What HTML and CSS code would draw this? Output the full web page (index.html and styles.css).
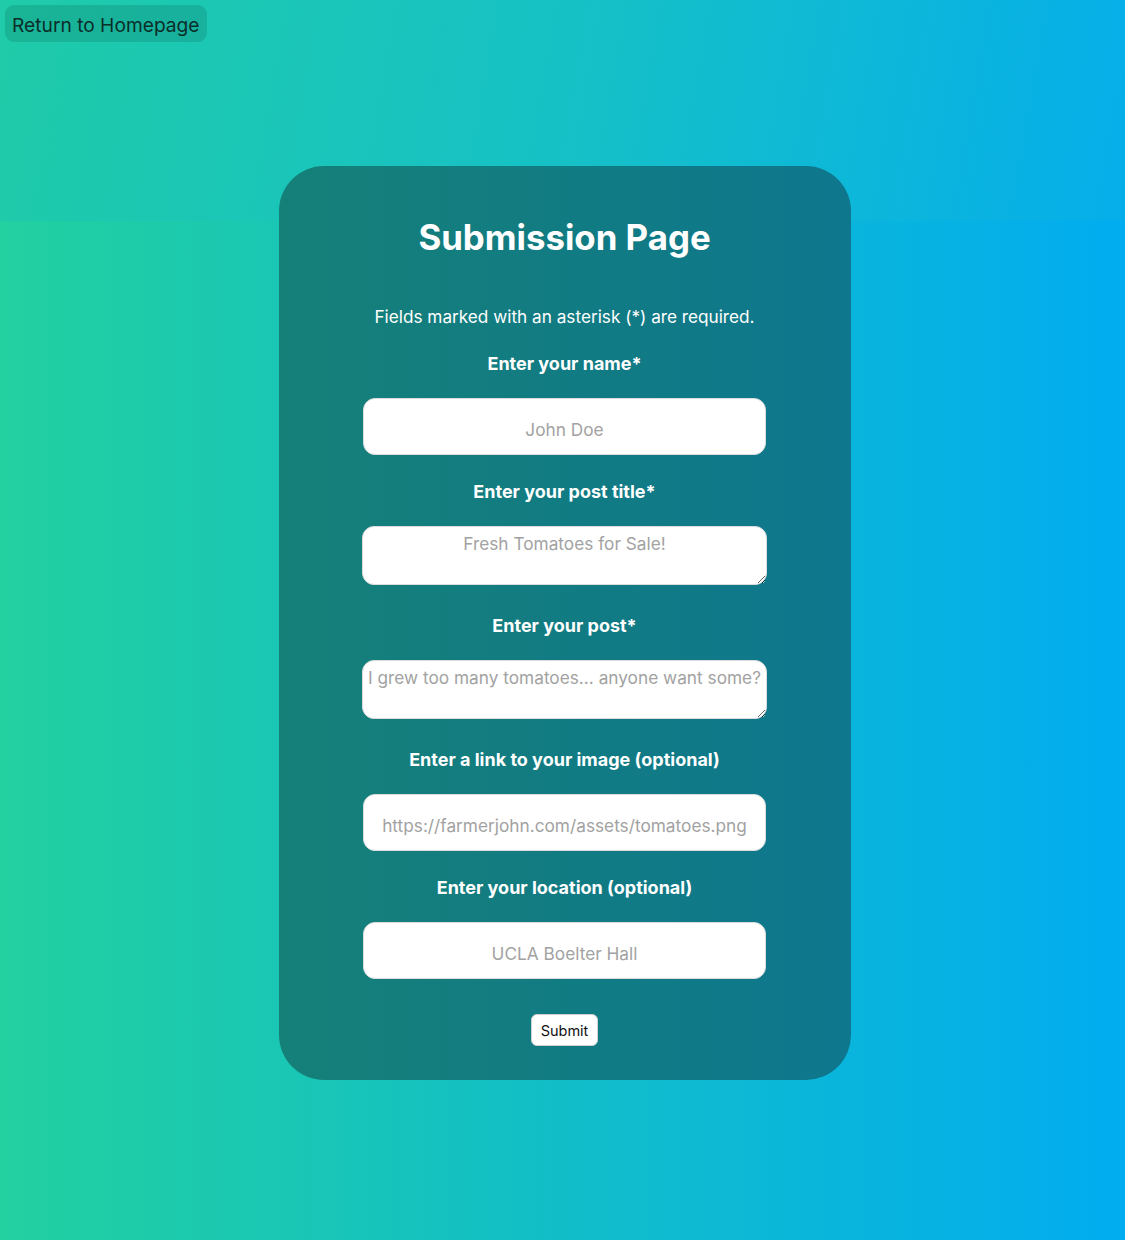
FILE: index.html
```html
<!DOCTYPE html>
<html lang="en">
<head>
<meta charset="utf-8">
<title>Submission Page</title>
<link rel="stylesheet" href="styles.css">
</head>
<body>
<header class="band">
  <button class="home-btn" type="button">Return to Homepage</button>
</header>
<main class="card">
  <h1 class="title">Submission Page</h1>
  <p class="note">Fields marked with an asterisk (*) are required.</p>
  <form class="form">
    <label class="label label-first" for="name">Enter your name*</label>
    <input class="field" id="name" type="text" placeholder="John Doe">
    <label class="label" for="title">Enter your post title*</label>
    <textarea class="area" id="title" placeholder="Fresh Tomatoes for Sale!"></textarea>
    <label class="label label-gap" for="post">Enter your post*</label>
    <textarea class="area area-tight" id="post" placeholder="I grew too many tomatoes... anyone want some?"></textarea>
    <label class="label label-gap" for="img">Enter a link to your image (optional)</label>
    <input class="field" id="img" type="text" placeholder="https://farmerjohn.com/assets/tomatoes.png">
    <label class="label" for="loc">Enter your location (optional)</label>
    <input class="field" id="loc" type="text" placeholder="UCLA Boelter Hall">
    <button class="submit" type="submit">Submit</button>
  </form>
</main>
</body>
</html>
```

FILE: styles.css
```css
html, body {
  margin: 0;
  padding: 0;
}
body {
  min-height: 1240px;
  background: linear-gradient(to right, #22d0a0, #01acf0);
  font-family: Inter, "Noto Sans", sans-serif;
}
.band {
  height: 221px;
  box-sizing: border-box;
  padding: 5px;
  background: linear-gradient(100deg, #1fcba8 0%, #16c1c6 50%, #05aeea 100%);
}
.home-btn {
  display: block;
  height: 37px;
  box-sizing: border-box;
  padding: 2px 7px 0;
  border: none;
  border-radius: 9px;
  background: rgba(0, 40, 35, 0.14);
  color: #0b2e29;
  font-family: Inter, "Noto Sans", sans-serif;
  font-size: 19.2px;
  line-height: 34px;
}
.card {
  width: 572px;
  box-sizing: border-box;
  margin: -55px 0 0 calc(50% - 284px);
  padding: 49px 0 34px;
  border-radius: 45px;
  background: linear-gradient(to right, #158078, #0e778e);
  color: #fff;
  display: flex;
  flex-direction: column;
  align-items: center;
}
.title {
  margin: 0;
  font-size: 34.8px;
  line-height: 44px;
  font-weight: 700;
}
.note {
  margin: 47px 0 0;
  font-size: 17.2px;
  line-height: 22px;
}
.form {
  display: flex;
  flex-direction: column;
  align-items: center;
  width: 100%;
}
.label {
  display: block;
  margin-top: 26px;
  font-size: 18px;
  line-height: 22px;
  font-weight: 700;
}
.label-first {
  margin-top: 25px;
}
.label-gap {
  margin-top: 30px;
}
.field {
  display: block;
  margin-top: 23px;
  width: 403px;
  height: 57px;
  box-sizing: border-box;
  border: 1px solid #dcdcdc;
  border-radius: 12px;
  background: #fff;
  text-align: center;
  font-family: Inter, "Noto Sans", sans-serif;
  font-size: 17.25px;
  color: #222;
  padding: 6px 8px 0;
}
.area {
  display: block;
  margin-top: 23px;
  width: 405px;
  height: 59px;
  box-sizing: border-box;
  border: 1px solid #dcdcdc;
  border-radius: 12px;
  background: #fff;
  text-align: center;
  font-family: Inter, "Noto Sans", sans-serif;
  font-size: 17.25px;
  line-height: 22px;
  color: #222;
  padding: 6px 4px;
}
.area-tight {
  padding: 6px 0;
}
.field::placeholder,
.area::placeholder {
  color: #a2a2a2;
  opacity: 1;
}
.submit {
  display: block;
  margin-top: 35px;
  height: 32px;
  padding: 0 9px;
  border: 1px solid #d0d0d0;
  border-radius: 6px;
  background: #fff;
  color: #111;
  font-family: Inter, "Noto Sans", sans-serif;
  font-size: 14.5px;
}
```
